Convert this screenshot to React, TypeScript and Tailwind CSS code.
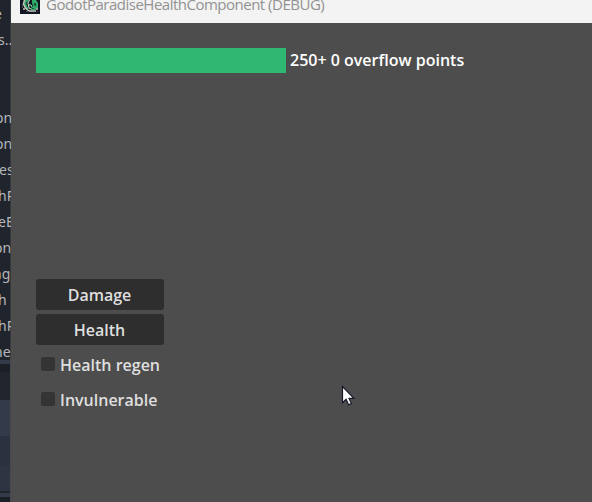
const sceneRows = [
  { text: "e", shift: "-ml-[6px]" },
  { text: "s...", shift: "-ml-[2px]" },
  { text: "", shift: "" },
  { text: "", shift: "" },
  { text: "on", shift: "-ml-[5px]" },
  { text: "on", shift: "-ml-[5px]" },
  { text: "es", shift: "-ml-px" },
  { text: "hP", shift: "-ml-[2px]" },
  { text: "eE", shift: "-ml-[2px]" },
  { text: "ont", shift: "-ml-[6px]" },
  { text: "ng", shift: "-ml-[7px]" },
  { text: "h", shift: "-ml-[2px]" },
  { text: "hP", shift: "-ml-[2px]" },
  { text: "ne", shift: "-ml-[6px]" },
];

function EditorEdge() {
  return (
    <aside className="flex w-[11px] shrink-0 flex-col overflow-hidden bg-[#20242d]">
      <div className="h-[357px] shrink-0 overflow-hidden bg-linear-to-r from-[#20242d] from-90% to-[#46484c] to-100% pt-px font-['Noto_Sans',sans-serif] text-[14px] leading-[26px] text-[#b5b7ba]">
        {sceneRows.map((row, i) => (
          <div key={i} className={`h-[26px] whitespace-nowrap ${row.shift}`}>
            {row.text}
          </div>
        ))}
      </div>
      <div className="flex flex-1 flex-col border-r border-[#46484c]">
        <div className="h-[3px] shrink-0 bg-[#20242d]" />
        <div className="h-1 shrink-0 bg-[#333a49]" />
        <div className="h-2 shrink-0 bg-[#1b2026]" />
        <div className="h-7 shrink-0 bg-[#21252e]" />
        <div className="h-9 shrink-0 bg-[#333a49]" />
        <div className="h-[30px] shrink-0 bg-[#2b313f]" />
        <div className="h-[25px] shrink-0 bg-[#2e3442]" />
        <div className="h-0.5 shrink-0 bg-[#20242d]" />
        <div className="h-1 shrink-0 bg-[#333a49]" />
        <div className="h-[5px] shrink-0 bg-[#1b2026]" />
      </div>
    </aside>
  );
}

function AppIcon() {
  return (
    <svg className="h-5 w-5 shrink-0" viewBox="0 0 20 20" aria-hidden="true">
      <path fill="#111522" d="M0 0h20v14H0z" />
      <path fill="#2fa86a" d="M5 0h4L7 3v3l2 3H7L4 5zM12 0h4l2 3v5l-3 2h-4V8l2-2-1-3zM9 4h2v2H9z" />
      <path fill="none" stroke="#c9c7bd" strokeWidth="1.5" d="M4.500 0 3.500 4l2 4L9 11h4" />
      <path fill="none" stroke="#d8d5cb" strokeWidth="1" d="M9.500 0 8 3l1 5 2 1" />
      <path fill="#9b9b94" d="M13 10h3v2h-3zM16 8h2v2h-2zM3 8h2v2H3zM11 5h1v2h-1z" />
      <path fill="#16573a" d="M6 2h1v3H6zM14 3h2v3h-2zM12 8h2v1h-2z" />
      <path fill="#494b4d" d="M2 4h1v4H2zM6 11h3v1H6zM17 11h1v1h-1z" />
    </svg>
  );
}

function CheckOption({ label }: { label: string }) {
  return (
    <label className="flex h-[31px] items-center pl-[5px]">
      <input type="checkbox" className="peer sr-only" />
      <span className="mr-[5px] mb-[2px] h-[14px] w-[14px] rounded-[2px] bg-[#343434]" />
      {label}
    </label>
  );
}

export default function App() {
  return (
    <div className="relative flex h-[502px] w-[592px] overflow-hidden bg-[#4d4d4d]">
      <EditorEdge />
      <div className="flex min-w-0 flex-1 flex-col">
        <header className="flex h-[23px] shrink-0 items-start gap-[6px] overflow-hidden bg-[#f3f3f3] pl-[9px]">
          <AppIcon />
          <h1 className="-mt-[7px] whitespace-nowrap font-['Open_Sans',sans-serif] text-[15px] leading-[22px] tracking-[-0.5px] text-[#929292]">
            GodotParadiseHealthComponent (DEBUG)
          </h1>
        </header>
        <main className="flex flex-1 flex-col pt-[25px] pl-[25px] font-['Open_Sans',sans-serif] text-[16px] font-semibold text-[#dfdfdf]">
          <div className="flex h-[25px] items-center gap-1 text-white">
            <div className="h-[25px] w-[250px] bg-[#2eb872]" />
            <span className="pb-[2px] whitespace-nowrap">250+ 0 overflow points</span>
          </div>
          <div className="mt-[206px] flex w-32 flex-col gap-1 whitespace-nowrap">
            <button className="h-[31px] rounded-[3px] bg-[#2e2e2e] px-0 pt-px pr-px">Damage</button>
            <button className="h-[31px] rounded-[3px] bg-[#2e2e2e] px-0 pt-px pr-px">Health</button>
            <CheckOption label="Health regen" />
            <CheckOption label="Invulnerable" />
          </div>
        </main>
      </div>
      <svg className="absolute top-[385px] left-[341px] h-[22px] w-[14px]" viewBox="0 0 14 22" aria-hidden="true">
        <path
          d="M1.500 1.500v16.200l3.600-3.500 2.500 5.600 2.800-1.200-2.400-5.200h4.900z"
          fill="white"
          stroke="#151827"
          strokeWidth="1.2"
        />
      </svg>
    </div>
  );
}
